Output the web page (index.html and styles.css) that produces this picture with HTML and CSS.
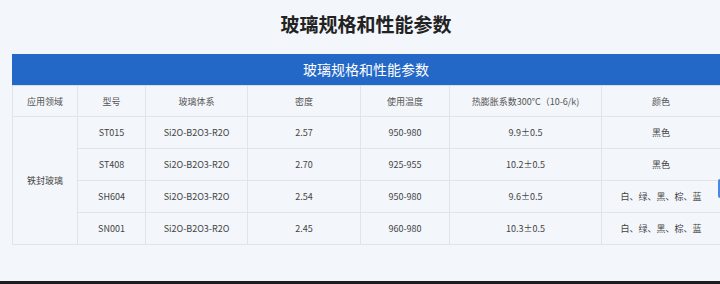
FILE: index.html
```html
<!DOCTYPE html>
<html lang="zh">
<head>
<meta charset="utf-8">
<link rel="stylesheet" href="styles.css">
</head>
<body>
<div class="page">
  <h1 class="title">玻璃规格和性能参数</h1>
  <div class="panel">
    <div class="caption">玻璃规格和性能参数</div>
    <table class="spec">
      <colgroup>
        <col class="c1"><col class="c2"><col class="c3"><col class="c4"><col class="c5"><col class="c6"><col class="c7">
      </colgroup>
      <thead>
        <tr>
          <th>应用领域</th><th>型号</th><th>玻璃体系</th><th>密度</th><th>使用温度</th><th>热膨胀系数300°C（10-6/k)</th><th>颜色</th>
        </tr>
      </thead>
      <tbody>
        <tr><td rowspan="4">铁封玻璃</td><td>ST015</td><td>Si2O-B2O3-R2O</td><td>2.57</td><td>950-980</td><td>9.9±0.5</td><td>黑色</td></tr>
        <tr><td>ST408</td><td>Si2O-B2O3-R2O</td><td>2.70</td><td>925-955</td><td>10.2±0.5</td><td>黑色</td></tr>
        <tr><td>SH604</td><td>Si2O-B2O3-R2O</td><td>2.54</td><td>950-980</td><td>9.6±0.5</td><td>白、绿、黑、棕、蓝</td></tr>
        <tr><td>SN001</td><td>Si2O-B2O3-R2O</td><td>2.45</td><td>960-980</td><td>10.3±0.5</td><td>白、绿、黑、棕、蓝</td></tr>
      </tbody>
    </table>
  </div>
</div>
<div class="side-tab"></div>
<div class="footer-edge"></div>
</body>
</html>
```
FILE: styles.css
```css
html, body {
  margin: 0;
  padding: 0;
}
body {
  width: 720px;
  height: 284px;
  overflow: hidden;
  background: #f3f6fa;
  font-family: "Noto Sans CJK SC", "Noto Sans", sans-serif;
  position: relative;
}
.page {
  margin-left: 12px;
  width: 708px;
}
.title {
  margin: 0;
  height: 54px;
  line-height: 48px;
  text-align: center;
  font-size: 19px;
  font-weight: 700;
  color: #222;
}
.caption {
  height: 31px;
  line-height: 31px;
  background: #2367c7;
  color: #fff;
  text-align: center;
  font-size: 14px;
  border-bottom: 1px solid #d9dfe6;
}
.spec {
  width: 708px;
  border-collapse: collapse;
  table-layout: fixed;
  font-size: 9px;
  color: #444;
}
.c1 { width: 65px; }
.c2 { width: 68px; }
.c3 { width: 102px; }
.c4 { width: 113px; }
.c5 { width: 89px; }
.c6 { width: 152px; }
.c7 { width: 119px; }
.spec th, .spec td {
  border: 1px solid #e1e5eb;
  height: 31px;
  padding: 0;
  text-align: center;
  font-weight: 400;
}
.spec th {
  height: 30px;
  color: #555;
}
.spec thead th {
  border-top: none;
}
.side-tab {
  position: absolute;
  right: 0;
  top: 179px;
  width: 2px;
  height: 19px;
  background: #4a86e8;
  border-radius: 2px 0 0 2px;
}
.footer-edge {
  position: absolute;
  left: 0;
  right: 0;
  bottom: 0;
  height: 3px;
  background: #1c1c1e;
}
```
